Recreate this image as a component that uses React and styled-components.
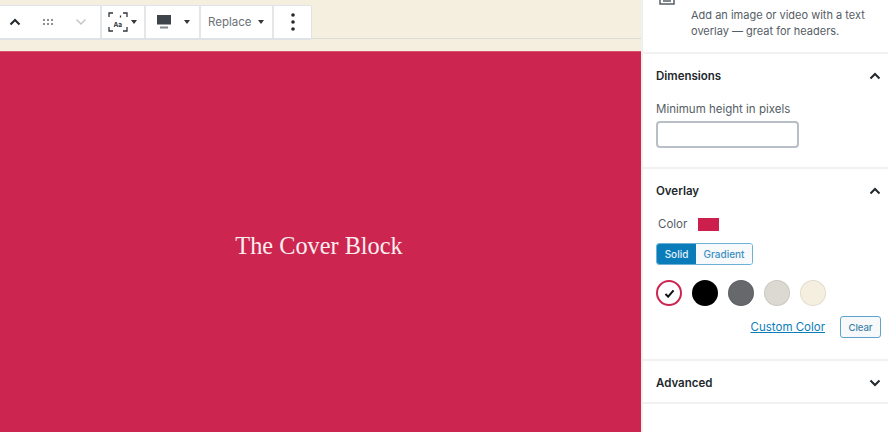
import React from "react";
import styled, { createGlobalStyle } from "styled-components";

const GlobalStyle = createGlobalStyle`
  html, body {
    margin: 0;
    padding: 0;
    background: #fff;
    font-family: Inter, "Liberation Sans", sans-serif;
  }
`;

const Page = styled.div`
  width: 888px;
  height: 432px;
  display: grid;
  grid-template-columns: 641px 1fr;
  overflow: hidden;
`;

const Editor = styled.main`
  display: flex;
  flex-direction: column;
`;

const TopStrip = styled.div`
  height: 51px;
  flex: none;
  box-sizing: border-box;
  padding-top: 5px;
  background: #f5efe0;
  display: flex;
  align-items: flex-start;
`;

const Toolbar = styled.div`
  height: 32px;
  display: flex;
  flex: none;
  background: #fff;
  border: 1px solid #dfe3e7;
  border-bottom-width: 2px;
  border-left: 0;
  border-radius: 0 2px 2px 0;
  box-sizing: content-box;
`;

const TopRule = styled.div`
  flex: 1;
  height: 1px;
  margin-top: 33px;
  background: #dcdcd6;
`;

const ToolGroup = styled.div`
  width: ${({ $w }) => $w}px;
  display: flex;
  align-items: center;
  justify-content: ${({ $justify }) => $justify || "space-between"};
  padding: ${({ $pad }) => $pad || "0"};
  box-sizing: border-box;
  border-right: 2px solid #e4e7ea;
  &:last-child {
    border-right: 0;
  }
`;

const Caret = styled.span`
  width: 0;
  height: 0;
  border-left: 3px solid transparent;
  border-right: 3px solid transparent;
  border-top: 4px solid #32373c;
`;

const ReplaceLabel = styled.span`
  font-size: 11.5px;
  color: #6c7278;
`;

const Cover = styled.section`
  flex: 1;
  background: #cc2650;
  border-top: 1px solid #d8516f;
  display: flex;
  align-items: center;
  justify-content: center;
  padding-top: 7px;
  padding-right: 3px;
`;

const CoverTitle = styled.h1`
  margin: 0;
  font-family: "Liberation Serif", serif;
  font-weight: 400;
  font-size: 24.3px;
  color: #fbeef0;
`;

const Sidebar = styled.aside`
  border-left: 2px solid #f0eff0;
  margin-top: -14px;
  display: flex;
  flex-direction: column;
  color: #23282d;
`;

const BlockCard = styled.div`
  display: flex;
  height: 68px;
  padding-left: 16px;
  box-sizing: border-box;
  gap: 16px;
  border-bottom: 2px solid #f1f1f2;
`;

const BlockText = styled.p`
  margin: 21px 0 0;
  font-size: 11px;
  line-height: 16px;
  color: #555d66;
  width: 186px;
`;

const Panel = styled.section`
  padding: 14px 7px 0 13px;
  box-sizing: border-box;
  height: ${({ $h }) => $h}px;
  border-bottom: 2px solid #f1f1f2;
`;

const PanelHead = styled.div`
  display: flex;
  align-items: center;
  justify-content: space-between;
  height: 16px;
  font-size: 11.5px;
  font-weight: 600;
  color: #23282d;
`;

const FieldLabel = styled.label`
  display: block;
  margin-top: 18px;
  font-size: 11.5px;
  line-height: 14px;
  color: #555d66;
`;

const HeightInput = styled.input`
  display: block;
  width: 143px;
  height: 27px;
  box-sizing: border-box;
  margin-top: 5px;
  background: #fff;
  border: 2px solid #b9bfc6;
  border-radius: 4px;
`;

const ColorRow = styled.div`
  display: flex;
  align-items: center;
  gap: 11px;
  margin: 18px 0 0 2px;
  font-size: 11.5px;
  color: #555d66;
`;

const ColorChip = styled.span`
  width: 21px;
  height: 13px;
  background: #cc1f4e;
`;

const Segments = styled.div`
  display: flex;
  width: 97px;
  height: 22px;
  margin-top: 12px;
  box-sizing: border-box;
  border: 1px solid #6fb0d6;
  border-radius: 3px;
  overflow: hidden;
`;

const Segment = styled.button`
  flex: ${({ $active }) => ($active ? "0 0 39px" : 1)};
  padding: 0;
  border: 0;
  font: 500 10px Inter, "Liberation Sans", sans-serif;
  background: ${({ $active }) => ($active ? "#0a7cba" : "#f7f9fb")};
  color: ${({ $active }) => ($active ? "#e4f1f8" : "#3a8fc2")};
`;

const Swatches = styled.div`
  display: flex;
  gap: 10px;
  margin-top: 15px;
`;

const Swatch = styled.span`
  width: 26px;
  height: 26px;
  box-sizing: border-box;
  border-radius: 50%;
  background: ${({ $color }) => $color};
  border: ${({ $ring }) => ($ring ? `2px solid ${$ring}` : "0")};
  box-shadow: ${({ $ring }) => ($ring ? "none" : "inset 0 0 0 1px rgba(0, 0, 0, 0.08)")};
  display: flex;
  align-items: center;
  justify-content: center;
`;

const ColorActions = styled.div`
  display: flex;
  align-items: center;
  justify-content: flex-end;
  gap: 15px;
  margin-top: 10px;
`;

const CustomLink = styled.a`
  font-size: 11.5px;
  color: #0a7cba;
  text-decoration: underline;
`;

const ClearButton = styled.button`
  width: 41px;
  height: 22px;
  padding: 0;
  font: 500 9.5px Inter, "Liberation Sans", sans-serif;
  color: #3a7fa8;
  background: #f6f8fa;
  border: 1px solid #5fa3cc;
  border-radius: 3px;
`;

const Chevron = ({ up, color = "#23282d", width = 2 }) => (
  <svg width="12" height="8" viewBox="0 0 12 8" fill="none">
    <path
      d={up ? "M1.5 6.5 6 2l4.5 4.5" : "M1.5 1.5 6 6l4.5-4.5"}
      stroke={color}
      strokeWidth={width}
    />
  </svg>
);

const DragDots = () => (
  <svg width="10" height="7" viewBox="0 0 10 7" fill="#8b9096">
    {[0, 4, 8].map((x) =>
      [0, 4].map((y) => <rect key={`${x}-${y}`} x={x} y={y} width="2" height="2" />)
    )}
  </svg>
);

const AlignIcon = () => (
  <svg width="20" height="20" viewBox="0 0 20 20" fill="none" stroke="#32373c" strokeWidth="1.3">
    <path d="M1 5V1h4M15 1h4v4M19 15v4h-4M5 19H1v-4" />
    <path d="M12.5 3.5v2" />
    <text x="5.5" y="15" fontSize="6.5" fontWeight="700" fill="#32373c" stroke="none" fontFamily="Inter, sans-serif">
      Aa
    </text>
  </svg>
);

const WidthIcon = () => (
  <svg width="14" height="14" viewBox="0 0 14 14" fill="#3e444a">
    <rect x="0" y="0" width="14" height="9.5" />
    <rect x="3" y="11.5" width="8" height="2" fill="#80858a" />
  </svg>
);

const MoreIcon = () => (
  <svg width="4" height="18" viewBox="0 0 4 18" fill="#23282d">
    <circle cx="2" cy="2" r="1.8" />
    <circle cx="2" cy="9" r="1.8" />
    <circle cx="2" cy="16" r="1.8" />
  </svg>
);

const CardIcon = () => (
  <svg width="16" height="20" viewBox="0 0 16 20" fill="none" stroke="#555d66" strokeWidth="1.5">
    <path d="M1 0v18h14V0" />
    <path d="M4 15h8" />
  </svg>
);

const Check = () => (
  <svg width="11" height="9" viewBox="0 0 12 10" fill="none" stroke="#111" strokeWidth="2.2">
    <path d="M1.5 5.5 4.5 8.5 10.5 1.5" />
  </svg>
);

const swatches = [
  { color: "#000000" },
  { color: "#66686c" },
  { color: "#dcd9d2" },
  { color: "#f5efe0" },
];

export default function App() {
  return (
    <Page>
      <GlobalStyle />
      <Editor>
        <TopStrip>
          <Toolbar>
            <ToolGroup $w={102} $pad="0 13px 0 9px">
              <Chevron up />
              <DragDots />
              <Chevron color="#c3c6c9" width={1.5} />
            </ToolGroup>
            <ToolGroup $w={44} $pad="0 7px 0 6px">
              <AlignIcon />
              <Caret />
            </ToolGroup>
            <ToolGroup $w={55} $pad="0 9px 0 11px">
              <WidthIcon />
              <Caret />
            </ToolGroup>
            <ToolGroup $w={73} $pad="0 8px 0 7px">
              <ReplaceLabel>Replace</ReplaceLabel>
              <Caret />
            </ToolGroup>
            <ToolGroup $w={37} $justify="center">
              <MoreIcon />
            </ToolGroup>
          </Toolbar>
          <TopRule />
        </TopStrip>
        <Cover>
          <CoverTitle>The Cover Block</CoverTitle>
        </Cover>
      </Editor>
      <Sidebar>
        <BlockCard>
          <CardIcon />
          <BlockText>Add an image or video with a text overlay — great for headers.</BlockText>
        </BlockCard>
        <Panel $h={115}>
          <PanelHead>
            Dimensions
            <Chevron up />
          </PanelHead>
          <FieldLabel>Minimum height in pixels</FieldLabel>
          <HeightInput />
        </Panel>
        <Panel $h={192}>
          <PanelHead>
            Overlay
            <Chevron up />
          </PanelHead>
          <ColorRow>
            Color
            <ColorChip />
          </ColorRow>
          <Segments>
            <Segment $active>Solid</Segment>
            <Segment>Gradient</Segment>
          </Segments>
          <Swatches>
            <Swatch $color="#fff" $ring="#cc2650">
              <Check />
            </Swatch>
            {swatches.map((s) => (
              <Swatch key={s.color} $color={s.color} />
            ))}
          </Swatches>
          <ColorActions>
            <CustomLink>Custom Color</CustomLink>
            <ClearButton>Clear</ClearButton>
          </ColorActions>
        </Panel>
        <Panel $h={43}>
          <PanelHead>
            Advanced
            <Chevron />
          </PanelHead>
        </Panel>
      </Sidebar>
    </Page>
  );
}
